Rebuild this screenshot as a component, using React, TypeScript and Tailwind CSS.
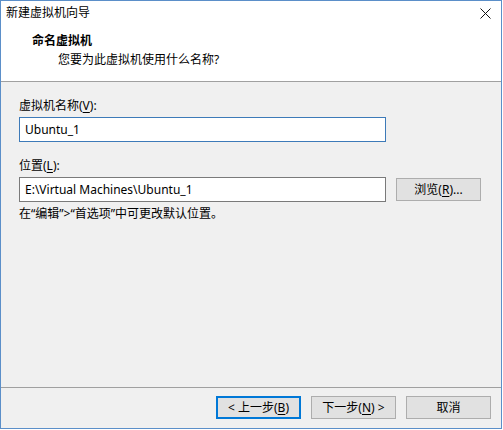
import React from 'react';

const font = { fontFamily: '"Noto Sans", "Noto Sans CJK SC", sans-serif' };

function Key({ children }: { children: React.ReactNode }) {
  return <span className="underline underline-offset-2">{children}</span>;
}

function CloseIcon() {
  return (
    <svg width="11" height="11" viewBox="0 0 11 11" className="block">
      <path d="M0.5 0.5 L10.5 10.5 M10.5 0.5 L0.5 10.5" stroke="#111" strokeWidth="1" fill="none" />
    </svg>
  );
}

function DialogButton({ children, focused }: { children: React.ReactNode; focused?: boolean }) {
  return (
    <button
      className={
        focused
          ? 'w-[85px] h-[23px] bg-[#e1e1e1] border-2 border-[#0078d7] text-[12px] leading-none text-black flex items-center justify-center'
          : 'w-[85px] h-[23px] bg-[#e1e1e1] border border-[#adadad] text-[12px] leading-none text-black flex items-center justify-center'
      }
    >
      {children}
    </button>
  );
}

export default function App() {
  return (
    <div className="w-[503px] h-[430px] bg-white" style={font}>
      <div className="w-[502px] h-[429px] border border-[#5b8fc9] bg-[#f0f0f0] flex flex-col text-black">
        {/* title + header */}
        <div className="h-[81px] bg-white border-b border-[#a0a0a0] flex flex-col">
          <div className="h-[24px] flex items-center justify-between pl-[5px] pr-[10px]">
            <span className="text-[12px] leading-[16px]">新建虚拟机向导</span>
            <CloseIcon />
          </div>
          <div className="pl-[31px] mt-[8px] text-[12px] leading-[16px] font-bold">命名虚拟机</div>
          <div className="pl-[57px] mt-[3px] text-[12px] leading-[16px]">您要为此虚拟机使用什么名称?</div>
        </div>

        {/* body */}
        <div className="flex-1 px-[18px] pt-[16px] text-[12px] leading-[16px]">
          <div>
            虚拟机名称(<Key>V</Key>):
          </div>
          <div className="mt-[3px] w-[367px] h-[25px] bg-white border border-[#3d7ab8] flex items-center px-[5px]">
            Ubuntu_1
          </div>

          <div className="mt-[16px]">
            位置(<Key>L</Key>):
          </div>
          <div className="mt-[3px] flex items-center gap-[10px]">
            <div className="w-[367px] h-[25px] bg-white border border-[#7a7a7a] flex items-center px-[5px]">
              E:\Virtual Machines\Ubuntu_1
            </div>
            <DialogButton>
              浏览(<Key>R</Key>)...
            </DialogButton>
          </div>
          <div className="mt-[4px]">在“编辑”&gt;“首选项”中可更改默认位置。</div>
        </div>

        {/* footer */}
        <div className="h-[41px] border-t border-[#a0a0a0] flex justify-end items-start pt-[8px] pr-[10px] gap-[10px]">
          <DialogButton focused>
            &lt; 上一步(<Key>B</Key>)
          </DialogButton>
          <DialogButton>
            下一步(<Key>N</Key>) &gt;
          </DialogButton>
          <DialogButton>取消</DialogButton>
        </div>
      </div>
    </div>
  );
}
